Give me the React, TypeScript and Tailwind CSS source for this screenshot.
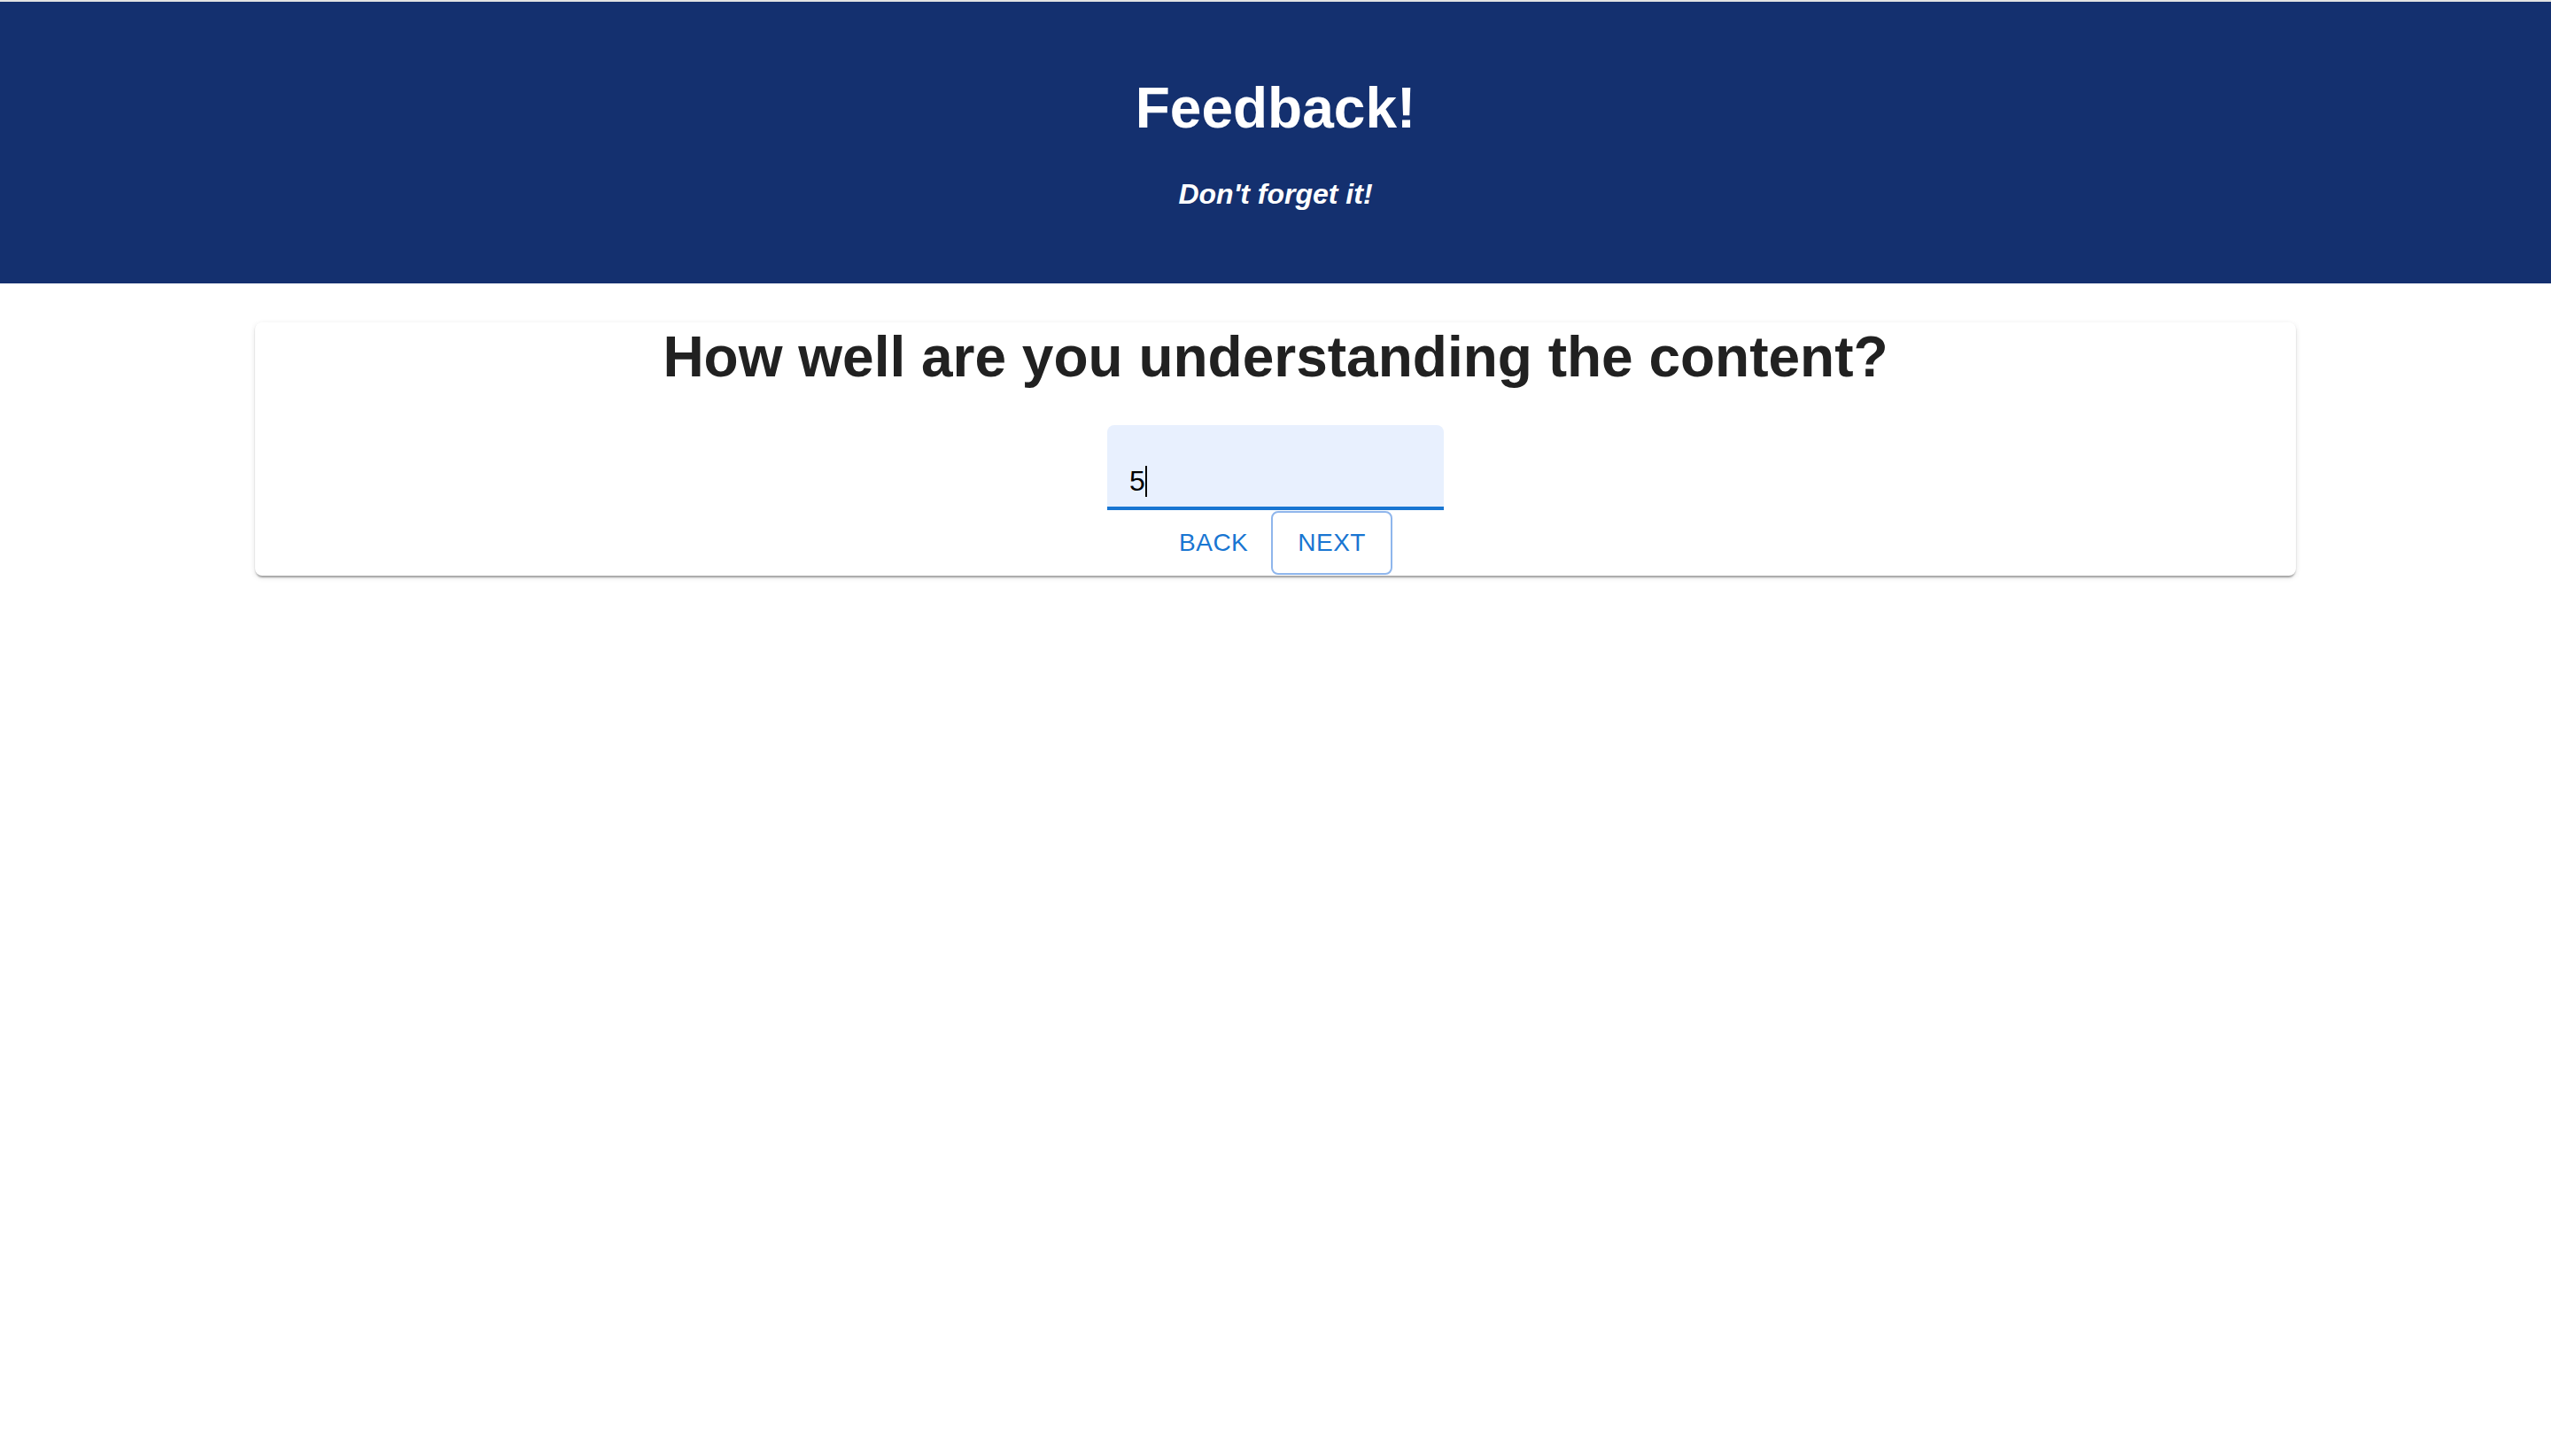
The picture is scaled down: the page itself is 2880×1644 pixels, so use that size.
const font = { fontFamily: '"Liberation Sans", Arial, sans-serif' };

const Header = () => (
  <header className="bg-[#14306f] text-white text-center pt-[88px] h-[318px]">
    <h1 className="text-[64px] leading-none font-bold m-0">Feedback!</h1>
    <h4 className="text-[32px] leading-none font-bold italic mt-[49px]">Don&apos;t forget it!</h4>
  </header>
);

const AnswerField = ({ value }: { value: string }) => (
  <div className="w-[380px] h-[96px] bg-[#e8f0fe] rounded-t-[8px] border-b-4 border-[#1976d2] pl-[25px] pt-[43px]">
    <div className="flex items-center h-[40px] text-[32px] text-black">
      <span>{value}</span>
      <span className="inline-block w-[2px] h-[35px] bg-black" />
    </div>
  </div>
);

const App = () => {
  return (
    <div className="min-h-screen bg-white" style={font}>
      <div className="h-[2px] bg-[#e3e3e3]" />
      <Header />
      <main className="pt-[44px]">
        <section className="w-[80%] mx-auto bg-white rounded-[8px] shadow-[0_4px_2px_-2px_rgba(0,0,0,0.2),0_2px_2px_0_rgba(0,0,0,0.14),0_2px_6px_0_rgba(0,0,0,0.12)] flex flex-col items-center h-[286px]">
          <h2 className="text-[64px] leading-none font-bold text-[#212121] mt-[7px] mb-[45px]">
            How well are you understanding the content?
          </h2>
          <AnswerField value="5" />
          <div className="flex items-center gap-[10px] pl-[7px] mt-[1px]">
            <button className="h-[72px] px-[16px] text-[28px] uppercase tracking-[0.5px] text-[#1976d2] rounded-[8px]">
              Back
            </button>
            <button className="h-[72px] px-[28px] text-[28px] uppercase tracking-[0.5px] text-[#1976d2] rounded-[8px] border-2 border-[#8fb6ec]">
              Next
            </button>
          </div>
        </section>
      </main>
    </div>
  );
};

export default App;
